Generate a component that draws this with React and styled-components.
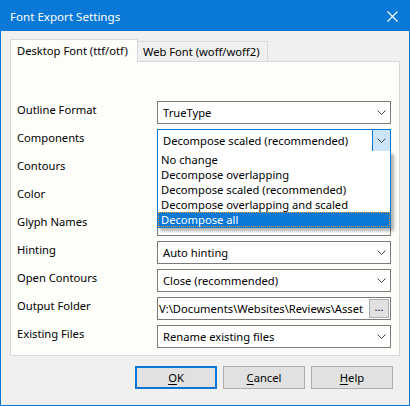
import React from "react";
import styled, { createGlobalStyle } from "styled-components";

const GlobalStyle = createGlobalStyle`
  body {
    margin: 0;
    font-family: "Noto Sans", "Open Sans", sans-serif;
    font-size: 11.2px;
    color: #000;
  }
`;

const accent = "#0a78d7";

const fields = [
  { label: "Outline Format", value: "TrueType" },
  { label: "Components", value: "Decompose scaled (recommended)", open: true },
  { label: "Contours", value: "" },
  { label: "Color", value: "" },
  { label: "Glyph Names", value: "" },
  { label: "Hinting", value: "Auto hinting" },
  { label: "Open Contours", value: "Close (recommended)" },
  { label: "Output Folder", value: "V:\\Documents\\Websites\\Reviews\\Asset", path: true },
  { label: "Existing Files", value: "Rename existing files" },
];

const options = [
  "No change",
  "Decompose overlapping",
  "Decompose scaled (recommended)",
  "Decompose overlapping and scaled",
  "Decompose all",
];

const Chevron = () => (
  <svg width="9" height="5" viewBox="0 0 9 5">
    <polyline points="0.5,0.5 4.5,4.5 8.5,0.5" fill="none" stroke="#444" strokeWidth="1" />
  </svg>
);

const App = () => {
  return (
    <>
      <GlobalStyle />
      <Window>
        <TitleBar>
          <span>Font Export Settings</span>
          <CloseIcon width="11" height="11" viewBox="0 0 11 11">
            <path d="M0.5 0.5 L10.5 10.5 M10.5 0.5 L0.5 10.5" stroke="#fff" strokeWidth="1.1" />
          </CloseIcon>
        </TitleBar>

        <Body>
          <TabStrip>
            <Tab $active>Desktop Font (ttf/otf)</Tab>
            <Tab>Web Font (woff/woff2)</Tab>
          </TabStrip>

          <Panel>
            <Form>
              {fields.map((f) => (
                <React.Fragment key={f.label}>
                  <Label>{f.label}</Label>
                  {f.path ? (
                    <PathField>
                      <PathText>{f.value}</PathText>
                      <BrowseButton>...</BrowseButton>
                    </PathField>
                  ) : (
                    <SelectBox $focused={f.open}>
                      <SelectText>{f.value}</SelectText>
                      <ArrowBox $focused={f.open}>
                        <Chevron />
                      </ArrowBox>
                      {f.open && (
                        <DropList>
                          {options.map((o, i) => (
                            <Option key={o} $selected={i === options.length - 1}>
                              {o}
                            </Option>
                          ))}
                        </DropList>
                      )}
                    </SelectBox>
                  )}
                </React.Fragment>
              ))}
            </Form>
          </Panel>

          <ButtonRow>
            <Button $default>
              <u>O</u>K
            </Button>
            <Button>
              <u>C</u>ancel
            </Button>
            <Button>
              <u>H</u>elp
            </Button>
          </ButtonRow>
        </Body>
      </Window>
    </>
  );
};

const Window = styled.div`
  width: 410px;
  height: 406px;
  box-sizing: border-box;
  border: 1px solid ${accent};
  background: #f0f0f0;
  display: flex;
  flex-direction: column;
`;

const TitleBar = styled.div`
  height: 30px;
  flex: none;
  background: ${accent};
  color: #fff;
  font-size: 11.6px;
  display: flex;
  align-items: center;
  justify-content: space-between;
  padding: 0 11px 0 9px;
`;

const CloseIcon = styled.svg`
  display: block;
`;

const Body = styled.div`
  flex: 1;
  padding: 8px 9px 0 9px;
  display: flex;
  flex-direction: column;
`;

const TabStrip = styled.div`
  display: flex;
  align-items: flex-end;
  height: 22px;
  position: relative;
  z-index: 1;
`;

const Tab = styled.div`
  box-sizing: border-box;
  border: 1px solid #d9d9d9;
  border-bottom: none;
  height: ${(p) => (p.$active ? "23px" : "20px")};
  margin-bottom: ${(p) => (p.$active ? "-1px" : "0")};
  background: ${(p) => (p.$active ? "#fdfdfa" : "#f0f0f0")};
  border-left: ${(p) => (p.$active ? "1px solid #d9d9d9" : "none")};
  width: ${(p) => (p.$active ? "128px" : "130px")};
  padding: ${(p) => (p.$active ? "1px 0 0 6px" : "0 0 0 5px")};
  line-height: 19px;
  white-space: nowrap;
`;

const Panel = styled.div`
  box-sizing: border-box;
  height: 295px;
  border: 1px solid #d9d9d9;
  background: #fdfdfa;
  padding: 39px 8px 0 6px;
`;

const Form = styled.div`
  display: grid;
  grid-template-columns: 140px 234px;
  grid-auto-rows: 23px;
  row-gap: 5px;
`;

const Label = styled.div`
  line-height: 16px;
  padding-top: 1px;
  white-space: nowrap;
`;

const SelectBox = styled.div`
  position: relative;
  box-sizing: border-box;
  height: 23px;
  border: 1px solid ${(p) => (p.$focused ? accent : "#7a7a7a")};
  background: #fff;
  display: flex;
  align-items: stretch;
`;

const SelectText = styled.div`
  flex: 1;
  padding-left: 5px;
  line-height: 21px;
  white-space: nowrap;
  overflow: hidden;
`;

const ArrowBox = styled.div`
  width: 16px;
  padding-right: 1px;
  display: flex;
  align-items: center;
  justify-content: center;
  background: ${(p) => (p.$focused ? "#cce4f7" : "transparent")};
  border-left: 1px solid ${(p) => (p.$focused ? accent : "transparent")};
`;

const DropList = styled.div`
  position: absolute;
  top: 100%;
  left: -1px;
  right: -1px;
  box-sizing: border-box;
  border: 1px solid ${accent};
  border-top: none;
  padding-top: 1px;
  background: #fff;
  box-shadow: 3px 3px 3px rgba(0, 0, 0, 0.3);
  z-index: 5;
`;

const Option = styled.div`
  height: 15px;
  padding: 1px 0 0 2px;
  box-sizing: border-box;
  white-space: nowrap;
  background: ${(p) => (p.$selected ? accent : "transparent")};
  color: ${(p) => (p.$selected ? "#fff" : "#000")};
  border: 1px dotted ${(p) => (p.$selected ? "#f59b2a" : "transparent")};
  line-height: 12px;
`;

const PathField = styled.div`
  box-sizing: border-box;
  height: 23px;
  border: 1px solid #7a7a7a;
  background: #fff;
  display: flex;
  align-items: center;
  padding-right: 1px;
`;

const PathText = styled.div`
  flex: 1;
  min-width: 0;
  overflow: hidden;
  white-space: nowrap;
  padding-left: 1px;
`;

const BrowseButton = styled.div`
  box-sizing: border-box;
  width: 20px;
  height: 19px;
  background: #e1e1e1;
  border: 1px solid #adadad;
  line-height: 14px;
  text-align: center;
  flex: none;
`;

const ButtonRow = styled.div`
  display: flex;
  justify-content: flex-end;
  gap: 6px;
  margin-top: 10px;
  padding-right: 7px;
`;

const Button = styled.div`
  box-sizing: border-box;
  width: 82px;
  height: 23px;
  background: #e1e1e1;
  border: ${(p) => (p.$default ? `2px solid ${accent}` : "1px solid #adadad")};
  display: flex;
  align-items: center;
  justify-content: center;
  u {
    text-decoration-thickness: 1px;
    text-underline-offset: 2px;
  }
`;

export default App;
